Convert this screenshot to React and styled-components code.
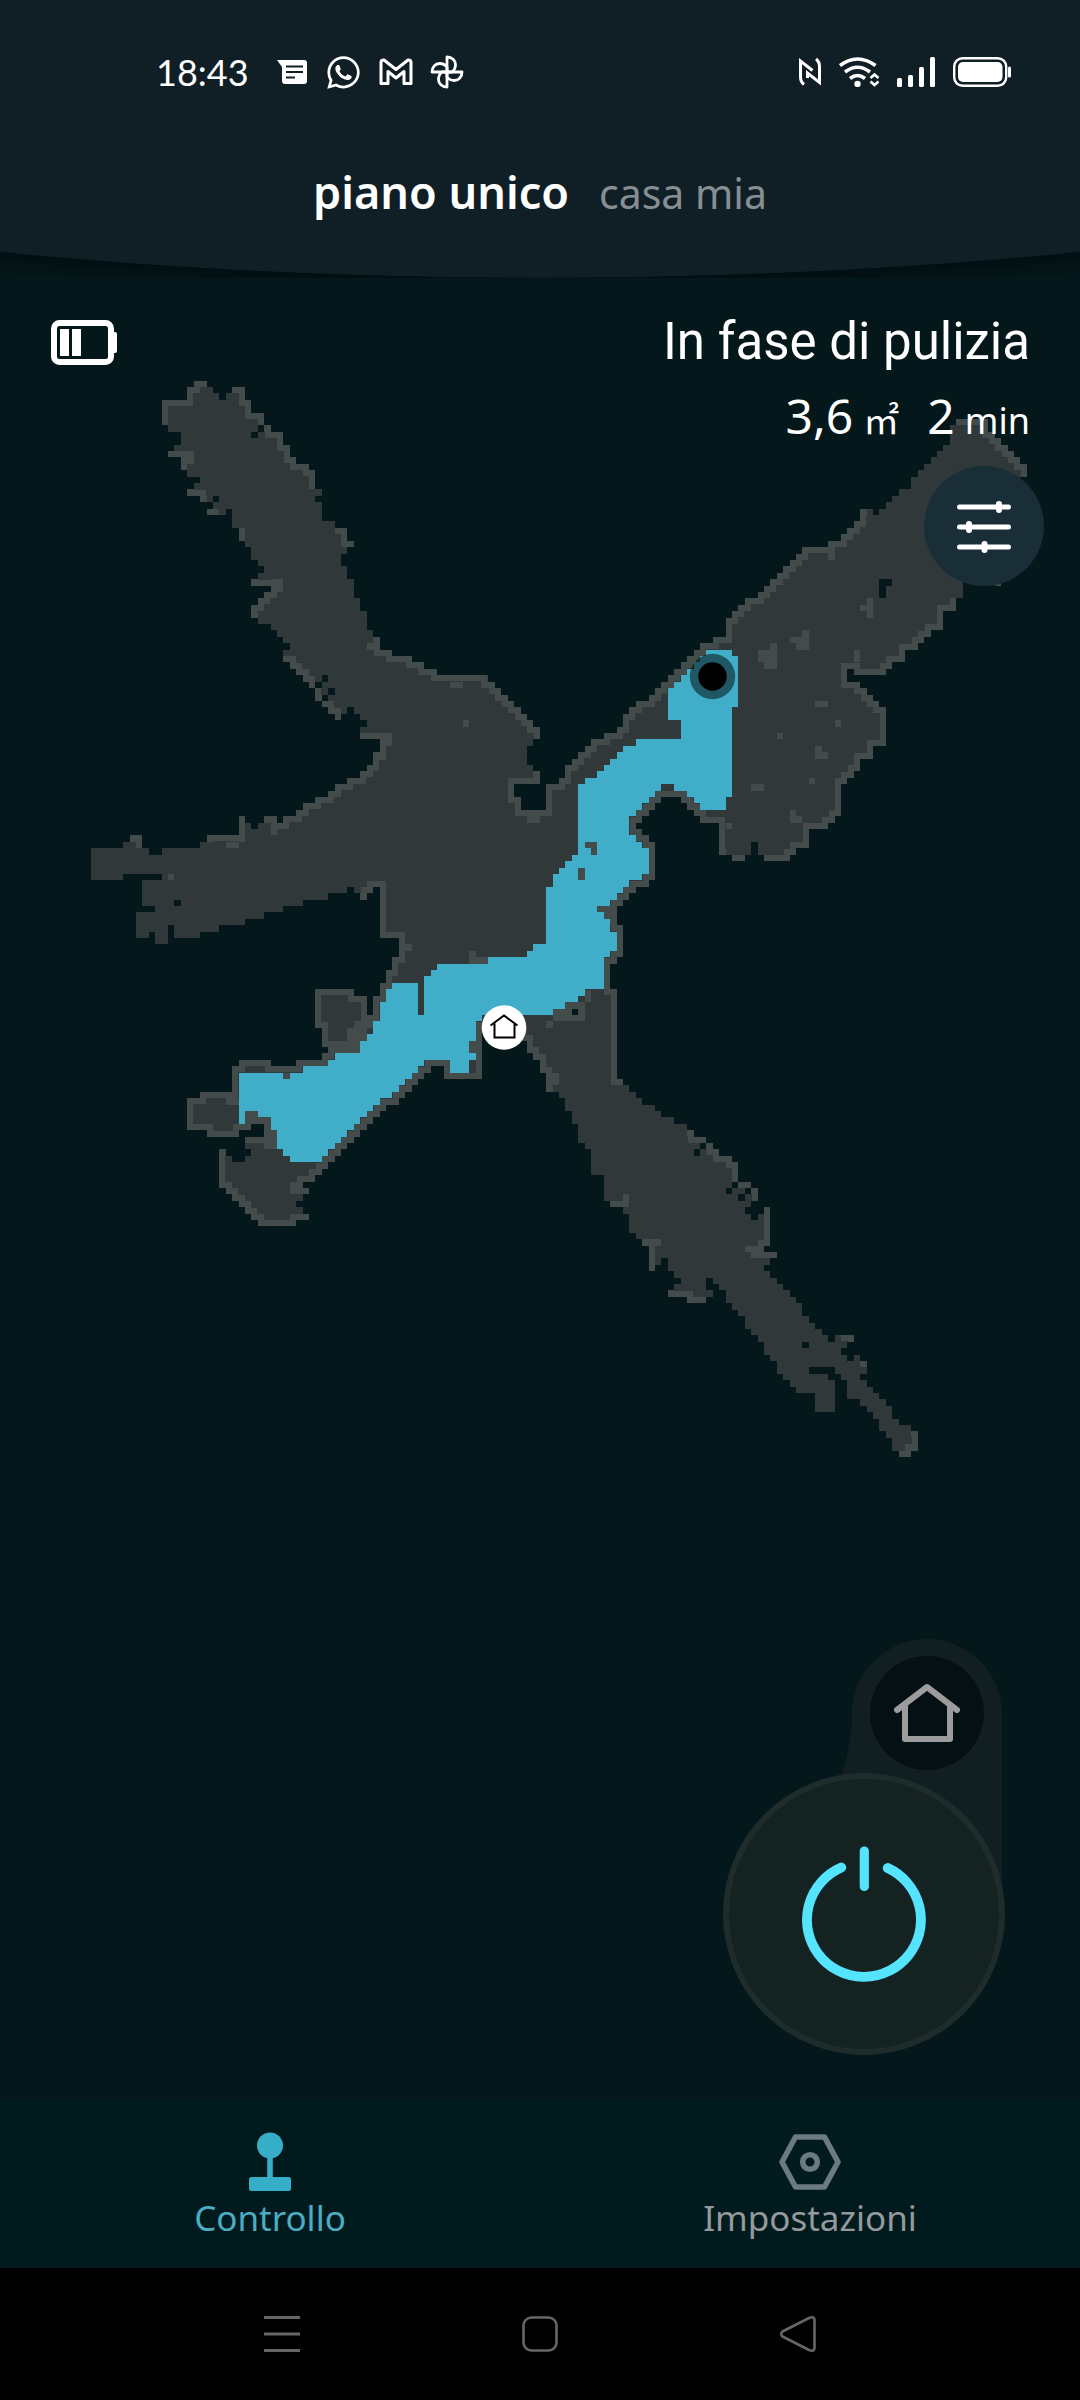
import React from "react";
import styled, { createGlobalStyle } from "styled-components";
import { FaWhatsapp } from "react-icons/fa";

const color = {
  page: "#04171a",
  header: "#101f26",
  nav: "#001a1e",
  floor: "#313839",
  wall: "#434b4b",
  cleaned: "#40aec8",
  accent: "#37aec8",
  power: "#54e4ff",
};

const GlobalStyle = createGlobalStyle`
  *, *::before, *::after { box-sizing: border-box; }
  body { margin: 0; background: ${color.page}; }
  h1, p { margin: 0; font-weight: inherit; }
  svg { display: block; flex: none; }
  button { border: 0; padding: 0; background: none; color: inherit; font: inherit; cursor: pointer; }
`;

const Screen = styled.div`
  display: flex;
  flex-direction: column;
  min-height: 100vh;
  background: ${color.page};
  color: #fff;
  font-family: Roboto, "Noto Sans", "Noto Sans CJK SC", sans-serif;
`;

/* ---------- header ---------- */

const Header = styled.header`
  height: 278px;
  background: radial-gradient(
    ellipse 119% 100% at 50% 0,
    ${color.header} 99.7%,
    #020f12 100%,
    #031215 103%,
    ${color.page} 108%
  );
`;

const StatusBar = styled.div`
  display: flex;
  justify-content: space-between;
  align-items: center;
  height: 144px;
  padding: 0 68px 0 156px;
`;

const StatusGroup = styled.div`
  display: flex;
  align-items: center;
  gap: ${(p) => p.$gap}px;
`;

const Clock = styled.time`
  margin-right: 10px;
  font-family: Lato, sans-serif;
  font-size: 36px;
  line-height: 48px;
`;

const HomeTitle = styled.div`
  display: flex;
  justify-content: center;
  align-items: baseline;
  gap: 30px;
  padding-top: 18px;
  font-family: "Noto Sans", sans-serif;
  line-height: 60px;
`;

const FloorName = styled.h1`
  font-size: 45px;
  font-weight: 600;
`;

const HouseName = styled.p`
  font-size: 41px;
  color: #878f93;
`;

/* ---------- map and overlay ---------- */

const Main = styled.main`
  flex: 1;
  display: grid;
  > * { grid-area: 1 / 1; }
`;

const MapCanvas = styled.svg`
  width: 100%;
  height: auto;
  align-self: start;
`;

const Overlay = styled.div`
  display: flex;
  flex-direction: column;
  justify-content: space-between;
  align-items: flex-end;
  padding: 34px 36px 45px 50px;
  z-index: 1;
`;

const Summary = styled.section`
  display: flex;
  flex-direction: column;
  align-items: flex-end;
  width: 100%;
`;

const SummaryRow = styled.div`
  display: flex;
  justify-content: space-between;
  align-items: center;
  width: 100%;
  padding-right: 14px;
`;

const StateText = styled.p`
  font-size: 51px;
  line-height: 60px;
`;

const Metrics = styled.div`
  display: flex;
  gap: 28px;
  padding: 14px 14px 20px 0;
  font-family: "Noto Sans", "Noto Sans CJK SC", sans-serif;
`;

const Metric = styled.p`
  display: flex;
  align-items: baseline;
  gap: 10px;
  font-size: 48px;
  line-height: 60px;
`;

const Unit = styled.span`
  font-size: 36px;
  line-height: 40px;
`;

const RoundButton = styled.button`
  display: grid;
  place-items: center;
  width: ${(p) => p.$size}px;
  height: ${(p) => p.$size}px;
  border-radius: 50%;
  background: ${(p) => p.$fill};
  ${(p) => p.$ring && `border: 6px solid ${p.$ring};`}
`;

const ControlPad = styled.div`
  position: relative;
  display: flex;
  flex-direction: column;
  align-items: flex-end;
  gap: 3px;
  margin-right: 39px;
  padding-top: 18px;
`;

const PadShape = styled.svg`
  position: absolute;
  top: 0;
  right: 0;
`;

const HomeSlot = styled.div`
  position: relative;
  padding-right: 21px;
`;

const PowerSlot = styled.div`
  position: relative;
`;

/* ---------- bottom bars ---------- */

const TabBar = styled.nav`
  display: grid;
  grid-template-columns: 1fr 1fr;
  height: 168px;
  background: ${color.nav};
`;

const Tab = styled.a`
  display: flex;
  flex-direction: column;
  align-items: center;
  padding-top: 30px;
  color: ${(p) => (p.$active ? "#4bacc3" : "#949a9c")};
  font-family: "Noto Sans", sans-serif;
  font-size: 35px;
  line-height: 48px;
  text-decoration: none;
`;

const SystemBar = styled.div`
  display: flex;
  justify-content: center;
  align-items: center;
  gap: 222px;
  height: 132px;
  background: #000;
  color: #666;
`;

/* ---------- floor map data ----------
   The outline is stored as runs that alternate x, y, x, y: a start point
   followed by horizontal and vertical steps. Every run belongs to a scan tile,
   whose origin is in map units and whose own units are a third of one. */

const tiles = {
  A: [60, 360],
  B: [60, 740],
  C: [440, 600],
  D: [660, 400],
  E: [520, 980],
};

const toMap = (tile, value, axis) => +(tiles[tile][axis] + value / 3).toFixed(1);

const runPath = ([tile, , points], first = "M") =>
  points.reduce((d, v, i) => {
    const n = toMap(tile, v, i % 2);
    if (i === 0) return `${first}${n}`;
    if (i === 1) return `${d} ${n}`;
    return d + (i % 2 ? "V" : "H") + n;
  }, "");

const closedPath = (runs) => runs.map((r, i) => runPath(r, i ? "L" : "M")).join("") + "Z";

const outline = [
  ["A", 1, [306,195,306,120,381,81,402,63,441,81]],
  ["A", 0, [441,81,459,99,477,120,498,99,516,81]],
  ["A", 1, [516,81,555,120,573,159,612,195,633,216,669,255,690,291,708,312,747,330,765,387]],
  ["A", 0, [765,387,786,408,765,426,786,483,825,504]],
  ["A", 1, [825,504,861,543,882,561]],
  ["A", 0, [882,561,861,582,843,618,861,657,882,714,900,753,921,810,939,831]],
  ["A", 1, [939,831,960,870,996,888,1056,906,1092,927,1131,945,1283,966,1305,984,1323,1005,1344,1023,1362,1041,1383,1062,1401,1080,1419,1101,1440,1137]],
  ["C", 0, [300,417,279,438,261,495,279,513]],
  ["C", 1, [279,513,300,552,222,591,243,630,318,552,357,534,375,495,396,477,414,456,435,438,453,417,492,399,531,381,549,342,567,321,588,303,627,285,645,264,663,246,684,225,702,207,723,186,741,168,762,150,780,129,819,111,858,54]],
  ["D", 1, [198,672,198,654,216,633,234,615,255,594,294,576,312,558,330,537,351,519,369,498,390,480,408,462,426,441,504,423,543,402,561,384,582,363,600,327,621]],
  ["D", 0, [621,327,639,345,657,327,678,306,696,288,717,267,753,231,774,210,792,192,813,171,831,153,849,135,870,75,888,57]],
  ["D", 1, [888,57,984,96,1005,114,1023,135,1044,153,1062,171,1080,192,1101,231]],
  ["D", 0, [1101,231,1080,480,1023,558,1005,540,909,594,888]],
  ["D", 1, [888,594,888,633,849,690,813,711,792,729,774,750,735,786,696,807,678,825,582,807,561,846,600,864,621,885,639,903,657,921,678,1038,639,1077,600,1113,582,1134,561,1152,543,1248,525,1269,504,1287,447,1344,408,1365,390,1383,312,1365]],
  ["D", 0, [312,1365,294,1326,273,1365,255]],
  ["D", 1, [255,1365,255,1383,216,1365]],
  ["D", 0, [216,1365,198]],
  ["C", 1, [858,765,837,669,780,648,762,630,741,609,723,591,663,609,645,630,627,648,606,669,588,687,606,705,627,726,645,840,627,861,588,879,567,900,549,918,531,975,549,1071,531,1092,510,1167,531]],
  ["E", 1, [291,27,291,297,309,315]],
  ["E", 0, [309,315,327,336,348,354,366,375,405,393,423,411,462,432,501,450]],
  ["E", 1, [501,450,522,471,558,489,579,507,597,528,636,546,654,606,693,624,714,663]],
  ["E", 0, [714,663,693,681,675,702,693,720,714,702,732,681]],
  ["E", 1, [732,681,750,798,732,816,771,834]],
  ["E", 0, [771,834,750,855,732,873,750,894,771,912,789,930,810,951,828,969,846,1008,867,1029,885,1047,906,1065,924,1086,945,1065,963]],
  ["E", 1, [963,1065,1002,1086]],
  ["E", 0, [1002,1086,981,1104,963,1125,981,1143,1002,1125,1020,1143,1041,1182,1020,1200,1041,1221,1059,1239,1077,1257,1098,1278,1116,1317,1137,1335,1173,1353]],
  ["E", 1, [1173,1353,1194,1413,1173,1431,1137]],
  ["E", 0, [1137,1431,1137,1413,1116,1374,1098,1353,1077,1317,1059,1296,1041,1278,1020,1257,981,1200,963,1182,945,1161,867,1182,924,1200,945,1296,885,1239,828,1221,810,1200,789,1182,771,1143,750,1125,732,1086,714,1065,693,1047,675,1008,654,990,636,969,618,930,597,912,579,894,558,930,579,951,558,969]],
  ["E", 1, [558,969,501,951,444,930]],
  ["E", 0, [444,930,462,912,483,894,462,873,444,834,423,855,405,873]],
  ["E", 1, [405,873,387,798,366,777]],
  ["E", 0, [366,777,348,759,327,702,309,681]],
  ["E", 1, [309,681,270,663]],
  ["E", 0, [270,663,252,585,213,507,195,489,174,432,156,393,135,354,117,336,99]],
  ["C", 1, [339,1476,318,1419,300,1380,279,1359,261,1323,243,1302,222,1284,126,1437,12]],
  ["B", 1, [1152,1017,1152,978,1113,999,1092,1017,1074,1035,1056,1056,1035,1074,1017,1095,978,1113,960,1131,939,1152,921,1170,900,1191,882,1209,861,1227,843,1248,825,1266,804,1287,786,1305,765,1326,729,1344,747,1362]],
  ["B", 0, [747,1362,729,1383,708,1401,729,1422]],
  ["B", 1, [729,1422,747,1440,708,1458,594,1440,573,1422,555,1401,537,1383,516,1362,498,1344,477,1227,498]],
  ["B", 0, [498,1227,498,1248,516,1266,555,1248,573,1227,555]],
  ["B", 1, [555,1209,555,1191,612,1152,573,1170,537,1191,441,1170,381,1074,420,1056,516,978,537,960,633,978,708,960,786,939,804,921,786,864,765,747,882,768,921,825,939,768,960,729,978,690,996,651,1017,594,960,441,939,459,921,480,900,459]],
  ["B", 0, [900,459,882,441,861,459,804,480,729,498,669,516,612,537,555,555,477,576,420,594,342,555,324,612,285,576,267,594,228,516,285,498,246,420,306,402,189,420,93,324,189,306,210]],
  ["B", 1, [210,306,210,285,246,324]],
  ["B", 0, [246,324,267,345,306,324,420,306,441]],
  ["B", 1, [441,306,441,285,537,228,555]],
  ["B", 0, [555,228,555,249,573,267,594,249,612]],
  ["B", 1, [612,249,612,228,651,249,669,228,708,210,729,189,765,171,804,153,825,132,861,114,900,93,921,75,939,36,960,0]],
  ["A", 1, [960,1140,960,1137,900,1119]],
  ["A", 0, [900,1119,900,1101,921,1080,900,1062,882,1041,861,1062,843,1080]],
  ["A", 1, [843,1080,825,1062,804,1041,786,1023,765,984,747,966,729,945,708,927,690,906,669,888]],
  ["A", 0, [669,888,669,870,690,849,669,831,651,810,633,792,594,774]],
  ["A", 1, [594,774,573,735,594,714,612,696,633,678,573,657]],
  ["A", 0, [573,657,594,639,612,618,594,600,573,561,555,543]],
  ["A", 1, [555,543,537,504]],
  ["A", 0, [537,504,516,447,498,465,477]],
  ["A", 1, [477,465,441,447]],
  ["A", 0, [441,447,459,426,441]],
  ["A", 1, [441,426,420,408,381,387]],
  ["A", 0, [381,387,402,369,420,351,381,330]],
  ["A", 1, [381,330,363,291,324,273]],
  ["A", 0, [324,273,342,255,363,216,324,195]],
];

const cleaned = [
  ["C", 0, [798,150,876,168,894,321,876,591,858,630,780,609,762,591,741,573,702,552,663,573,645,591,627,609,606,630,588,648,567,705,588,726,606,744,627,822,606,840,567,861,549,879,531,900,510,918,471,936,492,957,510,996,531,1053,510,1071,492,1167,435,1188,414,1206,375,1227,339,1245,126,1263,108,1323,87,1359,108,1380,87,1419,30,1380]],
  ["B", 0, [1170,960,1092,978,1074,999,1056,1017,1035,1035,1017,1056,996,1074,960,1095,939,1113,921,1131,900,1152,882,1170,861,1191,843,1209,825,1227,804,1248,786,1266,690,1248,669,1227,651,1170,633,1131,594,1113,555,1152,537,999,729,978,804,960,825,939,900,903,921,882,939,843,960,786,978,747,996,729,1074,825,1092,708,1113,690,1131,672]],
  ["C", 0, [-9,1092,144,1071,261,1053,279,1032,318,861,339,822,357,804,375,783,396,765,414,552,435,534,471,513,492,495,510,477,531,456,549,438,588,417,723,360,684,264,702,246,723,225,741,207,762,186,780,168,798]],
];

/* tile, x, y, width, height */
const obstacles = [
  ["A",921,849,20,21],["A",1170,966,39,18],["A",1209,1080,18,21],["A",633,657,36,39],["A",363,273,39,39],["A",939,1176,39,24],["A",960,1119,36,39],["A",960,1137,18,60],["A",537,81,18,39],
  ["B",324,402,18,18],["B",1035,612,21,21],["B",633,249,18,36],["B",498,306,39,18],["B",537,228,18,78],
  ["B",882,843,57,21],["B",861,864,60,39],["B",804,903,96,36],["B",498,1074,39,21],
  ["B",555,1113,39,20],["B",573,1131,60,21],["B",612,1152,21,20],["B",612,1170,39,57],
  ["B",690,1326,39,36],["B",690,1422,40,18],["B",669,999,21,18],
  ["C",435,726,36,18],["C",453,744,18,21],["C",414,804,21,36],["C",87,1071,57,21],["C",87,1053,21,18],
  ["C",471,918,60,18],["C",492,936,39,21],["C",510,957,21,18],["C",87,1323,21,36],
  ["C",339,1227,96,36],["C",375,1206,60,21],["C",435,1170,18,36],["C",318,1263,21,21],["C",318,1419,39,36],["C",261,648,39,21],["C",858,669,18,18],
  ["D",504,441,21,39],["D",600,615,20,18],["D",621,594,18,60],["D",390,711,57,18],["D",426,690,21,60],["D",408,729,39,21],
  ["D",330,729,21,78],["D",294,750,57,36],["D",312,786,39,20],["D",582,750,18,36],["D",465,903,39,18],["D",525,960,18,21],
  ["D",351,999,18,18],["D",465,1038,21,39],["D",486,1056,18,21],["D",447,1134,18,18],["D",273,1152,39,21],["D",390,1230,18,39],["D",408,1248,18,21],["D",1005,540,18,18],
  ["E",675,798,57,18],["E",693,816,60,18],["E",309,642,18,39],["E",366,777,57,21],["E",1155,1392,20,21],["E",1020,1143,21,18],
];

const gaps = [
  ["A",594,195,18,21],["A",573,216,21,18],["A",459,408,18,18],["A",786,945,18,21],["A",765,966,21,18],["A",804,984,21,21],["A",786,1005,18,18],
  ["B",342,480,21,18],
  ["C",396,1227,18,18],
  ["D",657,537,39,21],["D",657,537,21,57],
  ["E",846,1086,21,18],["E",540,489,18,18],["E",522,507,18,21],["E",636,606,18,18],["E",618,624,18,18],["E",675,624,18,18],["E",654,642,21,21],
];

const Cells = ({ items, fill }) => (
  <g fill={fill}>
    {items.map(([tile, x, y, w, h], i) => (
      <rect key={i} x={toMap(tile, x, 0)} y={toMap(tile, y, 1)} width={w / 3} height={h / 3} />
    ))}
  </g>
);

const FloorMap = () => (
  <MapCanvas viewBox="0 278 1080 1822" role="img" aria-label="Mappa del piano">
    <defs>
      <clipPath id="floor-area">
        <path d={closedPath(outline)} />
      </clipPath>
    </defs>
    <g shapeRendering="crispEdges">
      <path d={closedPath(outline)} fill={color.floor} />
      <g clipPath="url(#floor-area)" fill="none" stroke={color.wall} strokeWidth="12.8">
        {outline.filter((r) => r[1]).map((r, i) => (
          <path key={i} d={runPath(r)} />
        ))}
      </g>
      <path d={closedPath(cleaned)} fill={color.cleaned} />
      <Cells items={obstacles} fill={color.wall} />
      <Cells items={gaps} fill={color.page} />
    </g>
    <circle cx="712.5" cy="676.5" r="22.7" fill="#000" fillOpacity=".5" />
    <circle cx="712.5" cy="676.5" r="14.2" />
    <circle cx="504" cy="1027.5" r="22.3" fill="#fff" />
    <path d="M490.5 1025.5L504 1015.5L517.5 1025.5M494.5 1023.5V1037.5H514.5V1023.5" fill="none" stroke="#000" strokeWidth="2" />
  </MapCanvas>
);

/* ---------- icons ---------- */

const MessagesIcon = () => (
  <svg width="32" height="34" viewBox="0 0 32 34">
    <path d="M1 5H28a3 3 0 0 1 3 3V26a3 3 0 0 1-3 3H9a3 3 0 0 1-3-3V12Z" fill="#fff" />
    <path d="M10 11.5H27M10 17H27M10 22.5H19" stroke={color.header} strokeWidth="2" />
  </svg>
);

const MailIcon = () => (
  <svg width="34" height="34" viewBox="0 0 34 34" fill="none" stroke="#fff" strokeWidth="3" strokeLinejoin="round">
    <path d="M2 28.500V7.500Q2 5 4.500 5H5L17 14.500L29 5H29.500Q32 5 32 7.500V28.500H25V16.500L17 23L9 16.500V28.500Z" />
  </svg>
);

const PinwheelIcon = () => (
  <svg width="34" height="34" viewBox="0 0 34 34" fill="none" stroke="#fff" strokeWidth="2.800" strokeLinejoin="round">
    {[0, 90, 180, 270].map((a) => (
      <path key={a} transform={`rotate(${a} 17 17)`} d="M17 17V2C22 2 25.500 5.500 25.500 9.500C25.500 13 24 15.500 22 17Z" />
    ))}
  </svg>
);

const NfcIcon = () => (
  <svg width="22" height="30" viewBox="0 0 22 30" fill="none" stroke="#fff" strokeWidth="3">
    <path d="M5 27.500C2.500 25.500 1.500 23 1.500 20V4L13.500 13.500M17 2C19.500 4 20.500 6.500 20.500 9.500V25.500L8.500 16V21" />
  </svg>
);

const WifiIcon = () => (
  <svg width="40" height="30" viewBox="0 0 40 30" fill="none" stroke="#fff" strokeWidth="3.600">
    <path d="M1 8.500Q18.500 -4.500 36.500 8.500M6 15Q18.500 5.500 31 15M11 21.500Q18.500 15.500 26 21.500" />
    <circle cx="18.500" cy="27" r="3.200" fill="#fff" stroke="none" />
    <path d="M31.500 21L35.500 17.500L39.500 21M31.500 24.500L35.500 28L39.500 24.500" strokeWidth="2.600" />
  </svg>
);

const SignalIcon = () => (
  <svg width="38" height="30" viewBox="0 0 38 30" fill="#fff">
    <rect x="0" y="21" width="5" height="9" rx="1.500" />
    <rect x="11" y="18" width="5" height="12" rx="1.500" />
    <rect x="22" y="10" width="5" height="20" rx="1.500" />
    <rect x="33" y="0" width="5" height="30" rx="1.500" />
  </svg>
);

const PhoneBatteryIcon = () => (
  <svg width="59" height="30" viewBox="0 0 59 30">
    <rect x="1.200" y="1.200" width="52" height="27.600" rx="8.500" fill="none" stroke="#fff" strokeWidth="2.400" />
    <rect x="5" y="5" width="44.500" height="20" rx="5" fill="#fff" />
    <path d="M56.500 11V19" stroke="#fff" strokeWidth="3" strokeLinecap="round" />
  </svg>
);

const RobotBatteryIcon = () => (
  <svg width="68" height="46" viewBox="0 0 68 46" role="img" aria-label="Batteria robot">
    <rect x="4" y="4" width="57" height="39" rx="5.500" fill="none" stroke="#fff" strokeWidth="6" />
    <path d="M63 13h2q2 0 2 2v17q0 2-2 2h-2Z" fill="#fff" />
    <path d="M10 10h9v27h-9ZM22 10h9v27h-9Z" fill="#fff" />
  </svg>
);

const SlidersIcon = () => (
  <svg width="56" height="56" viewBox="0 0 56 56" stroke="#fff" strokeLinecap="round">
    <path d="M3.500 9H52.500M3.500 29H52.500M3.500 49H52.500" strokeWidth="5" />
    <path d="M43 6V12M13 26V32M28.500 46V52" strokeWidth="6" />
  </svg>
);

const HouseIcon = () => (
  <svg width="68" height="60" viewBox="0 0 68 60" fill="none" stroke="#9c9c9c" strokeWidth="6" strokeLinecap="round" strokeLinejoin="round">
    <path d="M4 27L34 4L64 27M12 22V56H57V22" />
  </svg>
);

const PowerIcon = () => (
  <svg width="126" height="136" viewBox="0 0 126 136" fill="none" stroke={color.power} strokeLinecap="round">
    <path d="M40.300 21.500A57 57 0 1 0 86.700 22" strokeWidth="9.800" />
    <path d="M63.300 5V40.500" strokeWidth="9.200" />
  </svg>
);

const JoystickIcon = () => (
  <svg width="64" height="64" viewBox="0 0 64 64" fill={color.accent}>
    <circle cx="32" cy="15.500" r="13" />
    <path d="M29.200 26H34.800V50H29.200Z" />
    <rect x="11" y="47" width="42" height="14" rx="2.500" />
  </svg>
);

const NutIcon = () => (
  <svg width="64" height="64" viewBox="0 0 64 64" fill="none" stroke="#6b7b7f" strokeWidth="5.600" strokeLinejoin="round">
    <path d="M17.500 7H46.500L60 32L46.500 57H17.500L4 32Z" />
    <circle cx="32" cy="32" r="7.300" />
  </svg>
);

/* ---------- page ---------- */

export default function App() {
  return (
    <Screen>
      <GlobalStyle />
      <Header>
        <StatusBar>
          <StatusGroup $gap={17}>
            <Clock>18:43</Clock>
            <MessagesIcon />
            <FaWhatsapp size={37} />
            <MailIcon />
            <PinwheelIcon />
          </StatusGroup>
          <StatusGroup $gap={18}>
            <NfcIcon />
            <WifiIcon />
            <SignalIcon />
            <PhoneBatteryIcon />
          </StatusGroup>
        </StatusBar>
        <HomeTitle>
          <FloorName>piano unico</FloorName>
          <HouseName>casa mia</HouseName>
        </HomeTitle>
      </Header>

      <Main>
        <FloorMap />
        <Overlay>
          <Summary>
            <SummaryRow>
              <RobotBatteryIcon />
              <StateText>In fase di pulizia</StateText>
            </SummaryRow>
            <Metrics>
              <Metric>3,6<Unit>㎡</Unit></Metric>
              <Metric>2<Unit>min</Unit></Metric>
            </Metrics>
            <RoundButton $size={120} $fill="#1a2e38" aria-label="Opzioni mappa">
              <SlidersIcon />
            </RoundButton>
          </Summary>
          <ControlPad>
            <PadShape width="166" height="280" viewBox="0 0 166 280" fill="#111f23" aria-hidden="true">
              <path d="M13 76A75 75 0 0 1 163 76V280H0V145Q13 110 13 76Z" />
            </PadShape>
            <HomeSlot>
              <RoundButton $size={114} $fill="#041014" aria-label="Torna alla base">
                <HouseIcon />
              </RoundButton>
            </HomeSlot>
            <PowerSlot>
              <RoundButton $size={282} $fill="#152222" $ring="#1e2c2c" aria-label="Avvia o ferma">
                <PowerIcon />
              </RoundButton>
            </PowerSlot>
          </ControlPad>
        </Overlay>
      </Main>

      <TabBar>
        <Tab href="#controllo" $active aria-current="page">
          <JoystickIcon />
          Controllo
        </Tab>
        <Tab href="#impostazioni">
          <NutIcon />
          Impostazioni
        </Tab>
      </TabBar>

      <SystemBar>
        <button aria-label="App recenti">
          <svg width="36" height="36" viewBox="0 0 36 36" stroke="currentColor" strokeWidth="3">
            <path d="M0 1.500H36M0 18H36M0 34.500H36" />
          </svg>
        </button>
        <button aria-label="Home">
          <svg width="36" height="36" viewBox="0 0 36 36" fill="none" stroke="currentColor" strokeWidth="2.600">
            <rect x="1.500" y="1.500" width="33" height="33" rx="8" />
          </svg>
        </button>
        <button aria-label="Indietro">
          <svg width="36" height="36" viewBox="0 0 36 36" fill="none" stroke="currentColor" strokeWidth="2.600" strokeLinejoin="round">
            <path d="M2.500 15.500L29 2Q34.500 0 34.500 4V32Q34.500 36 29 34L2.500 20.500Q0 18 2.500 15.500Z" />
          </svg>
        </button>
      </SystemBar>
    </Screen>
  );
}
